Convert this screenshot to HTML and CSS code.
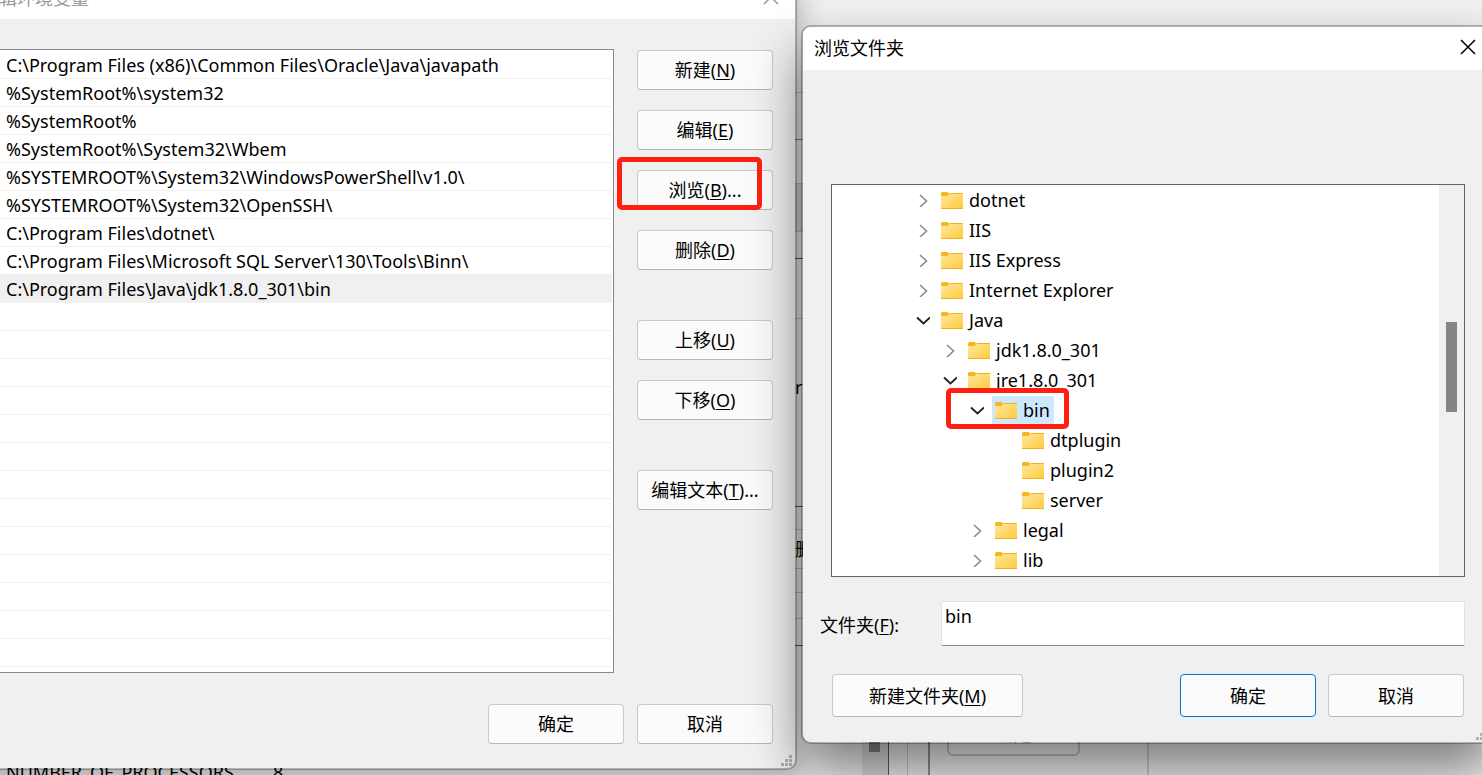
FILE: index.html
```html
<!DOCTYPE html>
<html lang="zh-CN">
<head>
    <meta charset="UTF-8">
    <meta name="viewport" content="width=device-width, initial-scale=1.0">
    <title>编辑环境变量</title>
    <link rel="stylesheet" href="styles.css">
</head>
<body>

    <svg class="defs" width="0" height="0">
        <defs>
            <linearGradient id="folderFill" x1="0" y1="0" x2="1" y2="1">
                <stop offset="0" stop-color="#ffe8a0"/>
                <stop offset="1" stop-color="#ffca3a"/>
            </linearGradient>
            <symbol id="folder" viewBox="0 0 22 17">
                <path d="M0 1.5Q0 0 1.5 0H6.5L8.5 2V5H0Z" fill="#f9b51c"/>
                <path d="M0 4H6.5L8.5 2H21Q22 2 22 3V16Q22 17 21 17H1Q0 17 0 16Z" fill="url(#folderFill)"/>
                <path d="M8.5 1.5H22M0 16.5H22" stroke="#eeb21f" fill="none"/>
            </symbol>
            <symbol id="right" viewBox="0 0 14 14">
                <path d="M4 2L10.500 8L4 14" fill="none" stroke="#8a8a8a" stroke-width="1.6"/>
            </symbol>
            <symbol id="down" viewBox="0 0 14 14">
                <path d="M1 4.500L7.500 10.500L14 4.500" fill="none" stroke="#222" stroke-width="1.8"/>
            </symbol>
            <symbol id="close" viewBox="0 0 16 16">
                <path d="M1 1L15 15M15 1L1 15" fill="none" stroke="currentColor" stroke-width="1.5"/>
            </symbol>
        </defs>
    </svg>

    <div class="desktop">

        <!-- windows underneath -->
        <div class="back-strip">
            <div class="strip s1"></div>
            <div class="strip s2"></div>
            <div class="strip s3"></div>
            <div class="strip s4"></div>
            <div class="strip s5"></div>
            <div class="strip s6"></div>
            <div class="strip s7">ri</div>
            <div class="strip s8"></div>
            <div class="strip s9">删</div>
            <div class="strip s10"></div>
            <div class="strip s11"></div>
            <div class="strip s12"></div>
        </div>
        <div class="back-bottom">
            <div class="back-vars"><span>NUMBER_OF_PROCESSORS</span><span>8</span></div>
            <div class="back-scroll"><div class="back-thumb"></div></div>
            <div class="back-gap"></div>
            <div class="back-edge"></div>
            <div class="back-panel"><button class="back-btn">确定</button></div>
            <div class="back-rest"></div>
        </div>

        <!-- edit environment variable -->
        <div class="window env">
            <div class="titlebar">
                <span>编辑环境变量</span>
                <button class="close" aria-label="关闭"><svg><use href="#close"/></svg></button>
            </div>
            <div class="env-body">
                <div class="env-main">
                    <ul class="paths">
                        <li>C:\Program Files (x86)\Common Files\Oracle\Java\javapath</li>
                        <li>%SystemRoot%\system32</li>
                        <li>%SystemRoot%</li>
                        <li>%SystemRoot%\System32\Wbem</li>
                        <li>%SYSTEMROOT%\System32\WindowsPowerShell\v1.0\</li>
                        <li>%SYSTEMROOT%\System32\OpenSSH\</li>
                        <li>C:\Program Files\dotnet\</li>
                        <li>C:\Program Files\Microsoft SQL Server\130\Tools\Binn\</li>
                        <li class="selected">C:\Program Files\Java\jdk1.8.0_301\bin</li>
                        <li></li><li></li><li></li><li></li><li></li><li></li><li></li>
                        <li></li><li></li><li></li><li></li><li></li><li></li>
                    </ul>
                    <div class="actions">
                        <button class="btn">新建(<u>N</u>)</button>
                        <button class="btn">编辑(<u>E</u>)</button>
                        <div class="marked">
                            <button class="btn">浏览(<u>B</u>)...</button>
                            <div class="mark mark-browse"></div>
                        </div>
                        <button class="btn">删除(<u>D</u>)</button>
                        <button class="btn spaced">上移(<u>U</u>)</button>
                        <button class="btn">下移(<u>O</u>)</button>
                        <button class="btn spaced">编辑文本(<u>T</u>)...</button>
                    </div>
                </div>
                <div class="env-footer">
                    <button class="btn">确定</button>
                    <button class="btn">取消</button>
                </div>
            </div>
            <svg class="grip" viewBox="0 0 11 11"><path d="M8 0h3v3h-3zM4 4h3v3h-3zM8 4h3v3h-3zM0 8h3v3h-3zM4 8h3v3h-3zM8 8h3v3h-3z" fill="#b0b0b0"/></svg>
        </div>

        <!-- browse for folder -->
        <div class="window browse">
            <div class="titlebar">
                <span>浏览文件夹</span>
                <button class="close" aria-label="关闭"><svg><use href="#close"/></svg></button>
            </div>
            <div class="browse-body">
                <div class="tree-box">
                    <ul class="tree">
                        <li><svg class="arrow"><use href="#right"/></svg><span class="node"><svg class="folder"><use href="#folder"/></svg>dotnet</span></li>
                        <li><svg class="arrow"><use href="#right"/></svg><span class="node"><svg class="folder"><use href="#folder"/></svg>IIS</span></li>
                        <li><svg class="arrow"><use href="#right"/></svg><span class="node"><svg class="folder"><use href="#folder"/></svg>IIS Express</span></li>
                        <li><svg class="arrow"><use href="#right"/></svg><span class="node"><svg class="folder"><use href="#folder"/></svg>Internet Explorer</span></li>
                        <li><svg class="arrow"><use href="#down"/></svg><span class="node"><svg class="folder"><use href="#folder"/></svg>Java</span></li>
                        <li class="l1"><svg class="arrow"><use href="#right"/></svg><span class="node"><svg class="folder"><use href="#folder"/></svg>jdk1.8.0_301</span></li>
                        <li class="l1"><svg class="arrow"><use href="#down"/></svg><span class="node"><svg class="folder"><use href="#folder"/></svg>jre1.8.0_301</span></li>
                        <li class="l2 marked"><svg class="arrow"><use href="#down"/></svg><span class="node active"><svg class="folder"><use href="#folder"/></svg>bin</span><div class="mark mark-bin"></div></li>
                        <li class="l3"><svg class="arrow"></svg><span class="node"><svg class="folder"><use href="#folder"/></svg>dtplugin</span></li>
                        <li class="l3"><svg class="arrow"></svg><span class="node"><svg class="folder"><use href="#folder"/></svg>plugin2</span></li>
                        <li class="l3"><svg class="arrow"></svg><span class="node"><svg class="folder"><use href="#folder"/></svg>server</span></li>
                        <li class="l2"><svg class="arrow"><use href="#right"/></svg><span class="node"><svg class="folder"><use href="#folder"/></svg>legal</span></li>
                        <li class="l2"><svg class="arrow"><use href="#right"/></svg><span class="node"><svg class="folder"><use href="#folder"/></svg>lib</span></li>
                    </ul>
                    <div class="scrollbar"><div class="thumb"></div></div>
                </div>
                <div class="field">
                    <label for="folderName">文件夹(<u>F</u>):</label>
                    <input type="text" id="folderName" value="bin">
                </div>
                <div class="browse-footer">
                    <button class="btn wide">新建文件夹(<u>M</u>)</button>
                    <button class="btn primary">确定</button>
                    <button class="btn">取消</button>
                </div>
            </div>
            <svg class="grip" viewBox="0 0 11 11"><path d="M8 0h3v3h-3zM4 4h3v3h-3zM8 4h3v3h-3zM0 8h3v3h-3zM4 8h3v3h-3zM8 8h3v3h-3z" fill="#b0b0b0"/></svg>
        </div>

    </div>

</body>
</html>
```
FILE: styles.css
```css
* {
    box-sizing: border-box;
}
body {
    margin: 0;
    font-family: "Noto Sans", "Noto Sans CJK SC", sans-serif;
    font-size: 18px;
    color: #000;
}
button, input {
    font: inherit;
    color: inherit;
}
ul {
    list-style: none;
    margin: 0;
    padding: 0;
}
u {
    text-underline-offset: 2px;
    text-decoration-thickness: 1px;
}
.defs {
    position: absolute;
}
.desktop {
    position: relative;
    height: 100vh;
    overflow: hidden;
    background: #f0f0f0;
}

/* windows */
.window {
    position: absolute;
    background: #f0f0f0;
    background-clip: padding-box;
    border: 2px solid rgba(0, 0, 0, 0.25);
    border-radius: 10px;
}
.titlebar {
    display: flex;
    align-items: center;
    justify-content: space-between;
    height: 43px;
    background: #fff;
    border-radius: 8px 8px 0 0;
}
.close {
    display: flex;
    padding: 0;
    border: none;
    background: none;
}
.close svg {
    width: 16px;
    height: 16px;
}
.grip {
    position: absolute;
    right: 3px;
    bottom: 2px;
    width: 11px;
    height: 11px;
}
.btn {
    width: 136px;
    height: 40px;
    padding: 0 0 2px;
    background: #fbfbfb;
    border: 1px solid #c9c9c9;
    border-bottom-color: #b5b5b5;
    border-radius: 4px;
}
.primary {
    border-color: #0078d4;
}

/* red highlight frames */
.marked {
    position: relative;
}
.mark {
    position: absolute;
    border: 5px solid #ff2012;
    border-radius: 5px;
}
.mark-browse {
    left: -20px;
    top: -13px;
    width: 145px;
    height: 53px;
}
.mark-bin {
    left: 114px;
    top: -7px;
    width: 123px;
    height: 41px;
}

/* environment variable window */
.env {
    left: -30px;
    top: -26px;
    width: 827px;
    box-shadow: 0 12px 30px rgba(0, 0, 0, 0.3);
}
.env .titlebar {
    padding: 0 16px 2px 9px;
    color: #999;
}
.env-body {
    padding: 30px 22px 24px 20px;
}
.env-main {
    display: flex;
    gap: 23px;
}
.paths {
    flex: 1;
    padding: 1px 1px 5px 0;
    background: #fff;
    border: 1px solid #828790;
}
.paths li {
    height: 28px;
    padding-left: 13px;
    line-height: 28px;
    border-bottom: 1px solid #f0f0f0;
    white-space: nowrap;
}
.paths .selected {
    background: #f0f0f0;
}
.actions {
    display: flex;
    flex-direction: column;
    gap: 20px;
    padding-top: 1px;
}
.spaced {
    margin-top: 30px;
}
.env-footer {
    display: flex;
    justify-content: flex-end;
    gap: 13px;
    margin-top: 31px;
}

/* browse window */
.browse {
    left: 801px;
    right: -10px;
    top: 25px;
    box-shadow: 0 26px 50px rgba(0, 0, 0, 0.48);
}
.browse .titlebar {
    padding: 0 14px 3px 11px;
}
.browse-body {
    padding: 114px 25px 25px 28px;
}
.tree-box {
    display: flex;
    background: #fff;
    border: 1px solid #646464;
}
.tree {
    flex: 1;
    padding-bottom: 1px;
}
.tree li {
    display: flex;
    align-items: center;
    gap: 8px;
    height: 30px;
    padding-left: 84px;
}
.tree .l1 {
    padding-left: 111px;
}
.tree .l2 {
    padding-left: 138px;
}
.tree .l3 {
    padding-left: 165px;
}
.arrow {
    width: 14px;
    height: 14px;
}
.node {
    display: flex;
    align-items: center;
    gap: 6px;
    height: 29px;
    padding: 0 4px 0 3px;
}
.active {
    background: #cce8ff;
    border-radius: 2px;
}
.folder {
    width: 22px;
    height: 17px;
}
.scrollbar {
    width: 25px;
    padding: 137px 7px 0;
    background: #f0f0f0;
}
.thumb {
    height: 90px;
    background: #858585;
}
.field {
    display: flex;
    align-items: center;
    margin: 24px 0 28px -11px;
}
.field label {
    width: 121px;
}
.field input {
    flex: 1;
    height: 45px;
    padding: 0 3px 15px;
    background: #fff;
    border: 1px solid #e3e3e3;
    border-bottom-color: #868686;
    border-radius: 2px;
    outline: none;
}
.browse-footer {
    display: flex;
    gap: 12px;
    padding: 0 1px;
}
.browse-footer .btn {
    height: 43px;
}
.browse-footer .wide {
    width: 191px;
    margin-right: auto;
}

/* pieces of the windows underneath */
.back-strip {
    position: absolute;
    left: 795px;
    top: 0;
    width: 24px;
}
.strip {
    border-bottom: 1px solid #c4c4c4;
    white-space: nowrap;
}
.s1 { height: 93px; }
.s2 { height: 47px; border-color: #828790; }
.s3 { height: 44px; }
.s4 { height: 48px; background: #d9d9d9; }
.s5 { height: 27px; border-color: #555a63; }
.s6 { height: 60px; }
.s7 { height: 188px; padding-top: 56px; border-color: #555a63; }
.s8 { height: 23px; }
.s9 { height: 39px; line-height: 38px; }
.s10 { height: 24px; }
.s11 { height: 26px; }
.s12 { height: 27px; border-color: #555a63; }
.back-bottom {
    position: absolute;
    left: 0;
    right: 0;
    bottom: 0;
    display: flex;
    height: 35px;
}
.back-vars {
    display: flex;
    gap: 39px;
    width: 862px;
    padding: 20px 6px 0;
}
.back-scroll {
    width: 27px;
    padding: 0 8px 0 7px;
    background: #ddd;
    border-right: 1px solid #555a63;
}
.back-thumb {
    height: 12px;
    background: #858585;
}
.back-gap {
    width: 19px;
    border-right: 1px solid #c4c4c4;
}
.back-edge {
    width: 22px;
    border-right: 2px solid #909090;
}
.back-panel {
    width: 219px;
    padding-left: 17px;
    border-right: 2px solid #ccc;
}
.back-btn {
    display: block;
    width: 133px;
    height: 40px;
    margin-top: -24px;
    padding: 0 0 6px;
    background: #f4f4f4;
    border: 2px solid #c4c4c4;
    border-radius: 6px;
}
.back-rest {
    flex: 1;
}
```
